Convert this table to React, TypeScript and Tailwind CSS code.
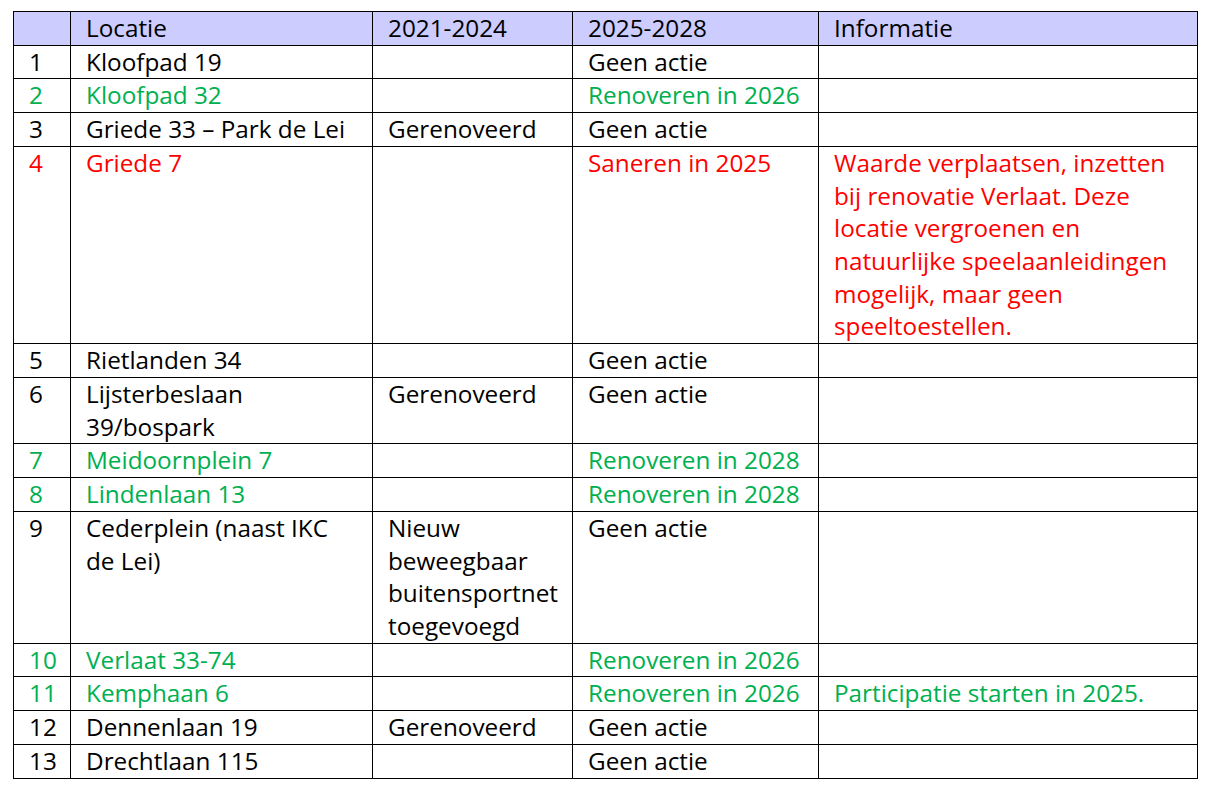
import React from "react";

type Row = {
  n: string;
  loc: React.ReactNode;
  a: React.ReactNode;
  b: React.ReactNode;
  info: React.ReactNode;
  color: "black" | "green" | "red";
};

const rows: Row[] = [
  { n: "1", loc: "Kloofpad 19", a: "", b: "Geen actie", info: "", color: "black" },
  { n: "2", loc: "Kloofpad 32", a: "", b: "Renoveren in 2026", info: "", color: "green" },
  { n: "3", loc: "Griede 33 – Park de Lei", a: "Gerenoveerd", b: "Geen actie", info: "", color: "black" },
  {
    n: "4",
    loc: "Griede 7",
    a: "",
    b: "Saneren in 2025",
    info: (
      <>
        Waarde verplaatsen, inzetten
        <br />
        bij renovatie Verlaat. Deze
        <br />
        locatie vergroenen en
        <br />
        natuurlijke speelaanleidingen
        <br />
        mogelijk, maar geen
        <br />
        speeltoestellen.
      </>
    ),
    color: "red",
  },
  { n: "5", loc: "Rietlanden 34", a: "", b: "Geen actie", info: "", color: "black" },
  {
    n: "6",
    loc: (
      <>
        Lijsterbeslaan
        <br />
        39/bospark
      </>
    ),
    a: "Gerenoveerd",
    b: "Geen actie",
    info: "",
    color: "black",
  },
  { n: "7", loc: "Meidoornplein 7", a: "", b: "Renoveren in 2028", info: "", color: "green" },
  { n: "8", loc: "Lindenlaan 13", a: "", b: "Renoveren in 2028", info: "", color: "green" },
  {
    n: "9",
    loc: (
      <>
        Cederplein (naast IKC
        <br />
        de Lei)
      </>
    ),
    a: (
      <>
        Nieuw
        <br />
        beweegbaar
        <br />
        buitensportnet
        <br />
        toegevoegd
      </>
    ),
    b: "Geen actie",
    info: "",
    color: "black",
  },
  { n: "10", loc: "Verlaat 33-74", a: "", b: "Renoveren in 2026", info: "", color: "green" },
  { n: "11", loc: "Kemphaan 6", a: "", b: "Renoveren in 2026", info: "Participatie starten in 2025.", color: "green" },
  { n: "12", loc: "Dennenlaan 19", a: "Gerenoveerd", b: "Geen actie", info: "", color: "black" },
  { n: "13", loc: "Drechtlaan 115", a: "", b: "Geen actie", info: "", color: "black" },
];

const colorClass = {
  black: "text-black",
  green: "text-[#00b050]",
  red: "text-[#ff0000]",
};

const cell = "border border-black align-top pl-[15px] pr-0 py-0 whitespace-nowrap overflow-hidden";

export default function App() {
  return (
    <div
      className="w-[1207px] h-[788px] bg-white pt-[11px] pl-[13px]"
      style={{ fontFamily: '"Open Sans", "Noto Sans", sans-serif' }}
    >
      <table className="border-collapse table-fixed w-[1184px] text-[24.3px] leading-[32.72px] tracking-[0px]">
        <colgroup>
          <col className="w-[57px]" />
          <col className="w-[302px]" />
          <col className="w-[200px]" />
          <col className="w-[246px]" />
          <col className="w-[379px]" />
        </colgroup>
        <thead>
          <tr className="bg-[#ccccff]">
            <th className={`${cell} font-normal text-left text-black`}></th>
            <th className={`${cell} font-normal text-left text-black`}>Locatie</th>
            <th className={`${cell} font-normal text-left text-black`}>2021-2024</th>
            <th className={`${cell} font-normal text-left text-black`}>2025-2028</th>
            <th className={`${cell} font-normal text-left text-black`}>Informatie</th>
          </tr>
        </thead>
        <tbody>
          {rows.map((r) => (
            <tr key={r.n} className={colorClass[r.color]}>
              <td className={cell}>{r.n}</td>
              <td className={cell}>{r.loc}</td>
              <td className={cell}>{r.a}</td>
              <td className={cell}>{r.b}</td>
              <td className={cell}>{r.info}</td>
            </tr>
          ))}
        </tbody>
      </table>
    </div>
  );
}
